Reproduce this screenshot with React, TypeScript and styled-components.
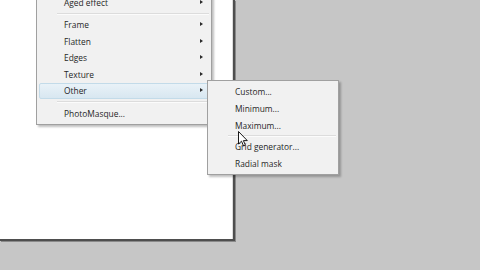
import React from "react";
import styled, { createGlobalStyle } from "styled-components";

const Global = createGlobalStyle`
  html, body { margin: 0; padding: 0; }
  body {
    width: 480px; height: 270px; overflow: hidden;
    background: #c5c5c5;
    font-family: "Open Sans", "DejaVu Sans", sans-serif;
  }
`;

const Stage = styled.div`
  position: relative;
  width: 480px;
  height: 270px;
  background: #c6c6c6;
`;

const Canvas = styled.div`
  width: 233px;
  height: 239px;
  background: #ffffff;
  border-right: 2px solid #4e4e4e;
  border-bottom: 2px solid #4e4e4e;
  box-shadow: inset -1px 0 0 #dcdcdc, 1px 1px 0 #8a8a8a;
`;

const Menu = styled.div<{ $left: number; $top: number; $width: number }>`
  position: absolute;
  left: ${(p) => p.$left}px;
  top: ${(p) => p.$top}px;
  width: ${(p) => p.$width}px;
  box-sizing: border-box;
  padding: 2px 2px;
  background: #f1f1f1;
  border: 1px solid #a0a0a0;
  box-shadow: 2px 2px 2px rgba(0, 0, 0, 0.25);
  display: flex;
  flex-direction: column;
`;

const Item = styled.div<{ $h: number; $active?: boolean }>`
  position: relative;
  height: ${(p) => p.$h}px;
  box-sizing: border-box;
  display: flex;
  align-items: center;
  padding-left: 24px;
  font-size: 8.4px;
  color: #262626;
  border: 1px solid ${(p) => (p.$active ? "#c3dbe9" : "transparent")};
  border-radius: 2px;
  background: ${(p) =>
    p.$active ? "linear-gradient(#e9f2f8, #d8e7f1)" : "transparent"};
`;

const Arrow = styled.span`
  position: absolute;
  right: 5px;
  top: 50%;
  margin-top: -2.5px;
  width: 0;
  height: 0;
  border-top: 2.5px solid transparent;
  border-bottom: 2.5px solid transparent;
  border-left: 3px solid #2a2a2a;
`;

const Sep = styled.div<{ $h: number }>`
  height: ${(p) => p.$h}px;
  display: flex;
  align-items: center;
  padding-left: 18px;
  &::after {
    content: "";
    flex: 1;
    height: 1px;
    background: #dcdcdc;
    border-bottom: 1px solid #fbfbfb;
  }
`;

const Cursor = styled.svg`
  position: absolute;
  left: 238px;
  top: 131px;
`;

const mainItems: Array<{ t: string; sep?: boolean; active?: boolean; arrow?: boolean }> = [
  { t: "Aged effect", arrow: true },
  { t: "", sep: true },
  { t: "Frame", arrow: true },
  { t: "Flatten", arrow: true },
  { t: "Edges", arrow: true },
  { t: "Texture", arrow: true },
  { t: "Other", arrow: true, active: true },
  { t: "", sep: true },
  { t: "PhotoMasque..." },
];

const subItems: Array<{ t: string; sep?: boolean }> = [
  { t: "Custom..." },
  { t: "Minimum..." },
  { t: "Maximum..." },
  { t: "", sep: true },
  { t: "Grid generator..." },
  { t: "Radial mask" },
];

export default function App() {
  return (
    <Stage>
      <Global />
      <Canvas />
      <Menu $left={36} $top={-9} $width={176}>
        {mainItems.map((it, i) =>
          it.sep ? (
            <Sep key={i} $h={6} />
          ) : (
            <Item key={i} $h={16.5} $active={it.active}>
              {it.t}
              {it.arrow && <Arrow />}
            </Item>
          )
        )}
      </Menu>
      <Menu $left={207} $top={80} $width={132}>
        {subItems.map((it, i) =>
          it.sep ? <Sep key={i} $h={4} /> : <Item key={i} $h={17}>{it.t}</Item>
        )}
      </Menu>
      <Cursor width="12" height="18" viewBox="0 0 12 18">
        <path
          d="M0.5 0.5 L0.5 13 L3.5 10.2 L5.6 15 L7.4 14.2 L5.4 9.6 L9.3 9.6 Z"
          fill="#ffffff"
          stroke="#000000"
          strokeWidth="0.9"
          strokeLinejoin="round"
        />
      </Cursor>
    </Stage>
  );
}
